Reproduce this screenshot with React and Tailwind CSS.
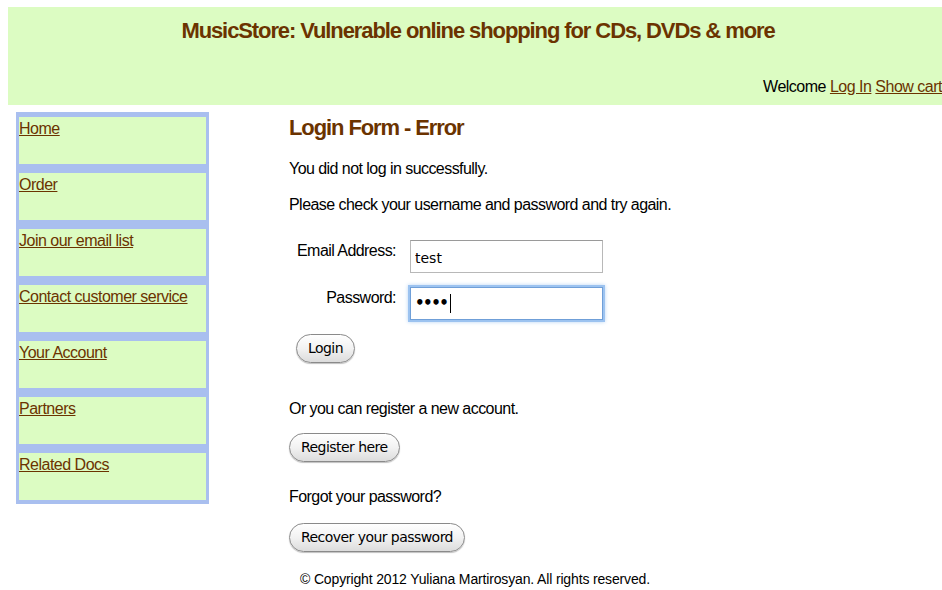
const navLinks = [
  'Home',
  'Order',
  'Join our email list',
  'Contact customer service',
  'Your Account',
  'Partners',
  'Related Docs',
];

const sans = "font-['Liberation_Sans',Arial,sans-serif]";
const ui = "font-['DejaVu_Sans',Verdana,sans-serif]";

function PillButton({ children }) {
  return (
    <button
      className={`${ui} h-[29px] px-[11px] rounded-full border border-[#8a8a8a] bg-gradient-to-b from-white via-[#f2f2f2] to-[#dcdcdc] text-[14px] text-black shadow-[0_1px_1px_rgba(0,0,0,0.25)]`}
    >
      {children}
    </button>
  );
}

export default function App() {
  return (
    <div className={`${sans} min-h-[590px] bg-white text-black`}>
      {/* Header */}
      <header className="ml-[8px] mt-[7px] h-[98px] bg-[#dcfcc2] flex flex-col">
        <h1 className="pt-[11px] pl-[6px] text-center text-[22px] font-bold text-[#6b3300] tracking-[-1.1px] leading-[26px]">
          MusicStore: Vulnerable online shopping for CDs, DVDs &amp; more
        </h1>
        <div className="mt-auto mb-[8px] text-right text-[16px] leading-[20px] tracking-[-0.5px]">
          Welcome{' '}
          <a href="#" className="text-[#6b3300] underline">Log In</a>{' '}
          <a href="#" className="text-[#6b3300] underline">Show cart</a>
        </div>
      </header>

      <div className="flex">
        {/* Side navigation */}
        <nav className="ml-[16px] mt-[7px] w-[193px] self-start bg-[#a9bfef] pt-[5px] pb-[4px] px-[3px] flex flex-col gap-[9px]">
          {navLinks.map((label) => (
            <div key={label} className="h-[47px] bg-[#dcfcc2]">
              <a
                href="#"
                className="text-[16px] leading-[22px] tracking-[-0.5px] text-[#6b3300] underline"
              >
                {label}
              </a>
            </div>
          ))}
        </nav>

        {/* Main content */}
        <main className="ml-[80px] mt-[10px] text-[16px] tracking-[-0.55px]">
          <h2 className="text-[22px] font-bold text-[#6b3300] leading-[26px] tracking-[-1.1px]">
            Login Form - Error
          </h2>
          <p className="mt-[18px] leading-[20px]">You did not log in successfully.</p>
          <p className="mt-[16px] leading-[20px]">Please check your username and password and try again.</p>

          <form className="mt-[25px]">
            <div className="grid grid-cols-[107px_193px] gap-x-[14px] gap-y-[14px] items-start">
              <label className="text-right leading-[20px] pt-[1px]">Email Address:</label>
              <input
                type="text"
                defaultValue="test"
                className={`${ui} h-[33px] border border-[#b8b8b8] border-t-[#9a9a9a] px-[4px] pt-[3px] text-[14px] tracking-normal outline-none`}
              />
              <label className="text-right leading-[20px] pt-[1px]">Password:</label>
              {/* focused password field with caret */}
              <div className={`${ui} h-[33px] flex items-center border border-[#6f9fd8] px-[4px] text-[15px] font-bold tracking-[-1.5px] shadow-[0_0_0_2px_#9cc3f0,0_0_4px_2px_#b9d6f5]`}>
                <span>••••</span>
                <span className="ml-[3px] h-[19px] w-px bg-black" />
              </div>
            </div>
            <div className="mt-[14px] ml-[7px]">
              <PillButton>Login</PillButton>
            </div>
          </form>

          <p className="mt-[36px] leading-[20px]">Or you can register a new account.</p>
          <div className="mt-[14px]">
            <PillButton>Register here</PillButton>
          </div>

          <p className="mt-[25px] leading-[20px]">Forgot your password?</p>
          <div className="mt-[16px]">
            <PillButton>Recover your password</PillButton>
          </div>

          <p className="mt-[18px] ml-[11px] text-[14px] leading-[18px] tracking-[-0.15px]">
            © Copyright 2012 Yuliana Martirosyan. All rights reserved.
          </p>
        </main>
      </div>
    </div>
  );
}
